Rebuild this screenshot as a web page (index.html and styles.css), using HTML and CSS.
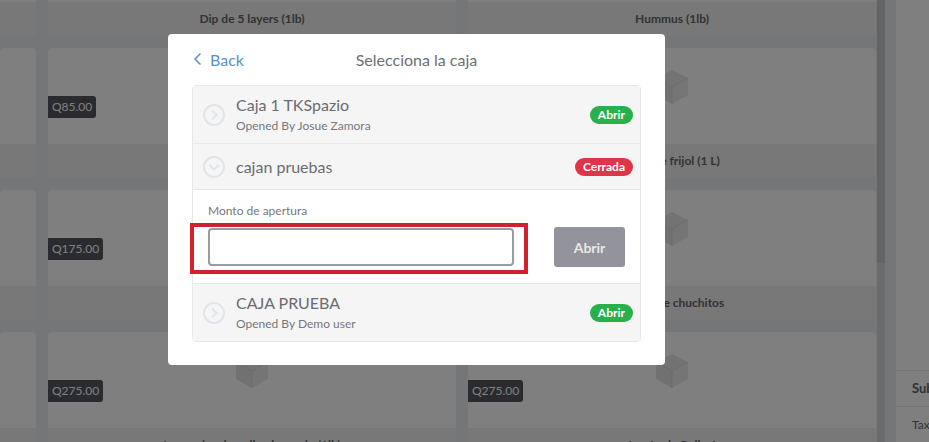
FILE: index.html
```html
<!DOCTYPE html>
<html>
<head>
  <meta charset="UTF-8">
  <link rel="stylesheet" href="styles.css">
</head>
<body>
  <svg class="sprites" width="0" height="0">
    <symbol id="box" viewBox="0 0 34 36">
      <polygon points="17,1 33,9 17,18 1,9" fill="#e6e6e6"/>
      <polygon points="1,9 17,18 17,35 1,26" fill="#e2e2e2"/>
      <polygon points="33,9 17,18 17,35 33,26" fill="#ebebeb"/>
      <path d="M1 9l16 9 16-9M17 18v17" fill="none" stroke="#d8d8d8" stroke-width="1"/>
    </symbol>
  </svg>

  <div class="products">
    <div class="card"><div class="card-img"></div><div class="card-name"></div></div>
    <div class="card"><div class="card-img"></div><div class="card-name">Dip de 5 layers (1lb)</div></div>
    <div class="card"><div class="card-img"></div><div class="card-name">Hummus (1lb)</div></div>

    <div class="card"><div class="card-img"></div><div class="card-name"></div></div>
    <div class="card">
      <div class="card-img"><span class="price">Q85.00</span><svg class="box"><use href="#box"/></svg></div>
      <div class="card-name"></div>
    </div>
    <div class="card">
      <div class="card-img"><svg class="box"><use href="#box"/></svg></div>
      <div class="card-name">Sopa de frijol (1 L)</div>
    </div>

    <div class="card"><div class="card-img"></div><div class="card-name"></div></div>
    <div class="card">
      <div class="card-img"><span class="price">Q175.00</span><svg class="box"><use href="#box"/></svg></div>
      <div class="card-name"></div>
    </div>
    <div class="card">
      <div class="card-img"><svg class="box"><use href="#box"/></svg></div>
      <div class="card-name">Orden de chuchitos</div>
    </div>

    <div class="card"><div class="card-img"></div><div class="card-name"></div></div>
    <div class="card">
      <div class="card-img"><span class="price">Q275.00</span><svg class="box"><use href="#box"/></svg></div>
      <div class="card-name">Longaniza de pollo ahumado (1lb)</div>
    </div>
    <div class="card">
      <div class="card-img"><span class="price">Q275.00</span><svg class="box"><use href="#box"/></svg></div>
      <div class="card-name">Jamón de Pollo 1</div>
    </div>
  </div>

  <div class="scrollbar"><div class="scrollbar-thumb"></div></div>

  <div class="summary">
    <div class="summary-row summary-sub">Subtotal</div>
    <div class="summary-row">Tax</div>
  </div>

  <div class="overlay">
    <div class="modal">
      <div class="modal-header">
        <a class="back">
          <svg width="9" height="14" viewBox="0 0 9 14"><path d="M7.5 1.5L2 7l5.5 5.5" fill="none" stroke="#5b8fc9" stroke-width="1.5"/></svg>
          Back
        </a>
        <div class="modal-title">Selecciona la caja</div>
      </div>

      <div class="register-list">
        <div class="register">
          <svg class="circle" viewBox="0 0 22 22"><circle cx="11" cy="11" r="10" /><path d="M9 6.5l4.5 4.5L9 15.5"/></svg>
          <div class="register-info">
            <div class="register-name">Caja 1 TKSpazio</div>
            <div class="register-by">Opened By Josue Zamora</div>
          </div>
          <span class="badge badge-open">Abrir</span>
        </div>

        <div class="register register-short">
          <svg class="circle" viewBox="0 0 22 22"><circle cx="11" cy="11" r="10" /><path d="M6.5 9l4.5 4.5L15.5 9"/></svg>
          <div class="register-info">
            <div class="register-name">cajan pruebas</div>
          </div>
          <span class="badge badge-closed">Cerrada</span>
        </div>

        <div class="open-form">
          <label class="open-label">Monto de apertura</label>
          <div class="open-row">
            <input type="text" class="open-input">
            <button class="open-btn">Abrir</button>
          </div>
          <div class="highlight"></div>
        </div>

        <div class="register register-last">
          <svg class="circle" viewBox="0 0 22 22"><circle cx="11" cy="11" r="10" /><path d="M9 6.5l4.5 4.5L9 15.5"/></svg>
          <div class="register-info">
            <div class="register-name">CAJA PRUEBA</div>
            <div class="register-by">Opened By Demo user</div>
          </div>
          <span class="badge badge-open">Abrir</span>
        </div>
      </div>
    </div>
  </div>
</body>
</html>
```

FILE: styles.css
```css
html, body {
  height: 100%;
}
body {
  margin: 0;
  display: flex;
  overflow: hidden;
  background: #eaecf0;
  font-family: Lato, sans-serif;
  color: #666;
}
.sprites {
  position: absolute;
}

/* product grid behind the modal */
.products {
  width: 876px;
  flex-shrink: 0;
  margin-top: -94px;
  display: grid;
  grid-template-columns: 36px 408px 408px;
  grid-auto-rows: 130px;
  gap: 12px;
}
.card {
  display: flex;
  flex-direction: column;
  background: #fefefe;
  border-radius: 4px;
  overflow: hidden;
}
.card-img {
  position: relative;
  height: 96px;
  display: flex;
  justify-content: center;
  padding-top: 21px;
  box-sizing: border-box;
}
.box {
  width: 34px;
  height: 36px;
}
.card-name {
  height: 34px;
  line-height: 34px;
  background: #f0f0f0;
  text-align: center;
  font-size: 12px;
  font-weight: 700;
  white-space: nowrap;
}
.price {
  position: absolute;
  left: 0;
  top: 48px;
  height: 22px;
  line-height: 22px;
  padding: 0 4px;
  background: #54565f;
  color: #fff;
  font-size: 12px;
  border-radius: 0 3px 3px 0;
}

.scrollbar {
  width: 8px;
  margin-left: 1px;
  flex-shrink: 0;
  background: #d8d8d8;
}
.scrollbar-thumb {
  height: 263px;
  background: #c8c8c8;
}

.summary {
  margin-left: 11px;
  flex: 1;
  background: #fefefe;
  display: flex;
  flex-direction: column;
  justify-content: flex-end;
}
.summary-row {
  height: 36px;
  box-sizing: border-box;
  line-height: 35px;
  padding-left: 16px;
  font-size: 12px;
  border-top: 1px solid #e8e8e8;
  white-space: nowrap;
  overflow: hidden;
}
.summary-sub {
  font-weight: 700;
  font-size: 13px;
}

/* modal */
.overlay {
  position: fixed;
  top: 0;
  left: 0;
  width: 100%;
  height: 100%;
  background: rgba(0, 0, 0, 0.5);
  padding: 34px 0 0 168px;
  box-sizing: border-box;
}
.modal {
  width: 497px;
  height: 331px;
  background: #fff;
  border-radius: 4px;
  padding: 0 24px;
  box-sizing: border-box;
}
.modal-header {
  height: 51px;
  padding-bottom: 1px;
  box-sizing: border-box;
  display: grid;
  grid-template-columns: 1fr auto 1fr;
  align-items: center;
}
.back {
  display: flex;
  align-items: center;
  gap: 8px;
  margin-left: 1px;
  color: #5b8fc9;
  font-size: 16px;
}
.modal-title {
  color: #6e6e73;
  font-size: 16px;
}
.register-list {
  border: 1px solid #e8e8e8;
  border-radius: 4px;
}
.register {
  height: 57px;
  display: flex;
  align-items: center;
  padding: 0 7px 0 10px;
  background: #f5f5f5;
  border-bottom: 1px solid #e8e8e8;
}
.register-short {
  height: 45px;
}
.register-last {
  border-bottom: none;
}
.circle {
  width: 22px;
  height: 22px;
  flex-shrink: 0;
  margin-right: 11px;
  fill: none;
  stroke: #e1e5ea;
  stroke-width: 2;
}
.register-info {
  flex: 1;
  margin-top: -1px;
}
.register-name {
  font-size: 16px;
  color: #6b6b70;
}
.register-by {
  margin-top: 4px;
  font-size: 12px;
  color: #77777b;
}
.badge {
  height: 18px;
  line-height: 18px;
  padding: 0 8px;
  border-radius: 9px;
  color: #fff;
  font-size: 12px;
  font-weight: 700;
}
.badge-open {
  background: #28b04c;
}
.badge-closed {
  background: #e03448;
}
.open-form {
  position: relative;
  height: 94px;
  padding: 13px 15px 0;
  box-sizing: border-box;
  background: #fff;
  border-bottom: 1px solid #e8e8e8;
}
.open-label {
  display: block;
  font-size: 12px;
  color: #77777b;
}
.open-row {
  display: flex;
  align-items: flex-start;
  justify-content: space-between;
  margin-top: 10px;
}
.open-input {
  width: 306px;
  height: 38px;
  box-sizing: border-box;
  border: 2px solid #9a9a9f;
  border-radius: 4px;
  outline: none;
  background: #fff;
}
.open-btn {
  width: 71px;
  height: 40px;
  margin-top: -1px;
  border: none;
  border-radius: 3px;
  background: #93939b;
  color: #e8e8ea;
  font-family: Lato, sans-serif;
  font-size: 14px;
  font-weight: 700;
}
/* red annotation box around the input */
.highlight {
  position: absolute;
  left: -3px;
  top: 33px;
  width: 338px;
  height: 51px;
  box-sizing: border-box;
  border: 4px solid #cf212e;
}
```
